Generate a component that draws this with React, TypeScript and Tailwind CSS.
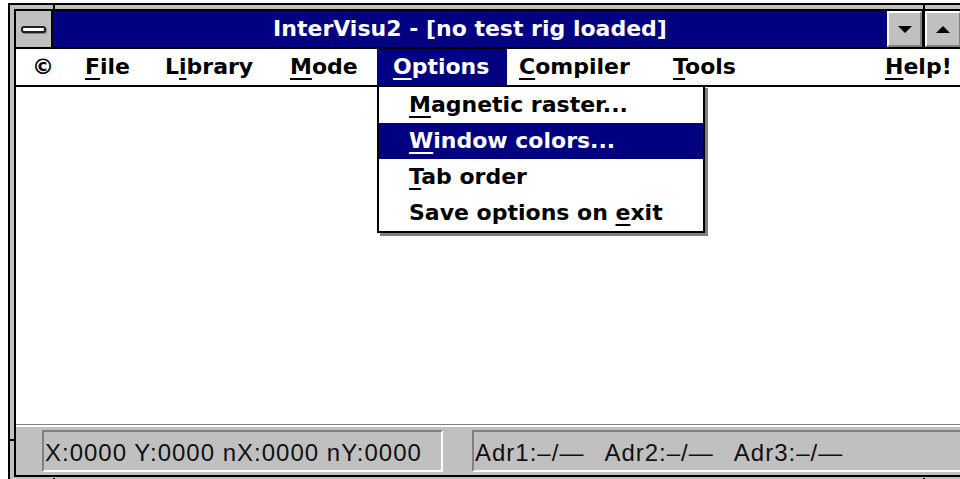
import React from "react";

type MenuItem = {
  before: string;
  key: string;
  after: string;
  box: string;
  active?: boolean;
};

const menuItems: MenuItem[] = [
  { before: "", key: "", after: "©", box: "w-[53px] pl-[16px]" },
  { before: "", key: "F", after: "ile", box: "w-[80px] pl-[16px]" },
  { before: "L", key: "i", after: "brary", box: "w-[125px] pl-[16px]" },
  { before: "", key: "M", after: "ode", box: "w-[103px] pl-[16px]" },
  { before: "", key: "O", after: "ptions", box: "w-[130px] pl-[16px]", active: true },
  { before: "", key: "C", after: "ompiler", box: "w-[150px] pl-[12px]" },
  { before: "", key: "T", after: "ools", box: "flex-1 pl-[16px]" },
  { before: "", key: "H", after: "elp!", box: "w-[92px] pl-[16px]" },
];

const dropItems = [
  { before: "", key: "M", after: "agnetic raster..." },
  { before: "", key: "W", after: "indow colors...", active: true },
  { before: "", key: "T", after: "ab order" },
  { before: "Save options on ", key: "e", after: "xit" },
];

function Mnemonic({ before, k, after }: { before: string; k: string; after: string }) {
  return (
    <span>
      {before}
      {k && <span className="underline decoration-2 underline-offset-[4px]">{k}</span>}
      {after}
    </span>
  );
}

function TitleButton({ dir }: { dir: "up" | "down" }) {
  return (
    <div className="h-full flex items-center justify-center bg-[#c0c0c0] border-2 border-t-white border-l-white border-b-[#808080] border-r-[#808080]">
      {dir === "down" ? (
        <div className="w-0 h-0 border-l-[7px] border-r-[7px] border-t-[7px] border-l-transparent border-r-transparent border-t-black" />
      ) : (
        <div className="w-0 h-0 border-l-[7px] border-r-[7px] border-b-[7px] border-l-transparent border-r-transparent border-b-black" />
      )}
    </div>
  );
}

export default function App() {
  return (
    <div className="relative w-[960px] h-[479px] overflow-hidden bg-white font-['DejaVu_Sans','Liberation_Sans',sans-serif]">
      {/* window frame */}
      <div className="relative ml-[8px] mt-[3px] w-[961px] border-2 border-black bg-[#c0c0c0] p-[4px]">
        {/* resize notches */}
        <div className="absolute left-[43px] top-0 w-[2px] h-[4px] bg-black" />
        <div className="absolute left-[913px] top-0 w-[2px] h-[4px] bg-black" />
        <div className="absolute left-0 top-[434px] w-[4px] h-[2px] bg-black" />
        <div className="absolute left-[43px] top-[473px] w-[2px] h-[4px] bg-black" />
        <div className="absolute left-[913px] top-[473px] w-[2px] h-[4px] bg-black" />

        <div className="border-2 border-black bg-white flex flex-col overflow-hidden">
          {/* title bar */}
          <div className="flex h-[38px] border-b-2 border-black">
            <div className="w-[37px] h-[36px] flex items-center justify-center bg-[#c0c0c0] border-r-2 border-black">
              <div className="w-[25px] h-[7px] rounded-[3px] border-2 border-[#202020] bg-white shadow-[1px_1px_0_#808080]" />
            </div>
            <div className="flex-1 h-[36px] bg-[#000080] text-white font-bold text-[22px] leading-[36px] text-center">
              InterVisu2 - [no test rig loaded]
            </div>
            <div className="w-[35px] h-[36px]">
              <TitleButton dir="down" />
            </div>
            <div className="w-[3px] h-[36px] bg-black" />
            <div className="w-[36px] h-[36px]">
              <TitleButton dir="up" />
            </div>
          </div>

          {/* menu bar */}
          <div className="flex h-[38px] border-b-2 border-black font-bold text-[22px] leading-[36px] text-black">
            {menuItems.map((m, i) => (
              <div
                key={i}
                className={`${m.box} h-[36px] whitespace-nowrap ${m.active ? "bg-[#000080] text-white" : ""}`}
              >
                <Mnemonic before={m.before} k={m.key} after={m.after} />
              </div>
            ))}
          </div>

          {/* client area */}
          <div className="h-[337px] bg-white" />

          {/* status bar */}
          <div className="border-t border-[#808080]">
            <div className="border-t-2 border-white bg-[#c0c0c0] pt-[3px] pb-[3px] flex overflow-hidden font-['Liberation_Sans',Arial,sans-serif] text-[24px] tracking-[1px] text-[#101010]">
              <div className="ml-[26px] w-[401px] h-[42px] shrink-0 border-2 border-t-[#808080] border-l-[#808080] border-b-white border-r-white">
                <div className="pl-[1px] pt-[4px] leading-[34px] whitespace-nowrap">
                  X:0000 Y:0000 nX:0000 nY:0000
                </div>
              </div>
              <div className="ml-[29px] w-[520px] h-[42px] shrink-0 border-2 border-t-[#808080] border-l-[#808080] border-b-white border-r-white">
                <div className="flex gap-[20px] pl-[1px] pt-[4px] leading-[34px] whitespace-nowrap">
                  <span>Adr1:–/—</span>
                  <span>Adr2:–/—</span>
                  <span>Adr3:–/—</span>
                </div>
              </div>
            </div>
          </div>
        </div>
      </div>

      {/* Options drop-down */}
      <div className="absolute left-[377px] top-[85px] w-[328px] border-2 border-black bg-white shadow-[3px_3px_0_#808080] font-bold text-[22px] leading-[36px] text-black">
        {dropItems.map((d, i) => (
          <div
            key={i}
            className={`h-[36px] pl-[30px] whitespace-nowrap ${d.active ? "bg-[#000080] text-white" : ""}`}
          >
            <Mnemonic before={d.before} k={d.key} after={d.after} />
          </div>
        ))}
      </div>
    </div>
  );
}
